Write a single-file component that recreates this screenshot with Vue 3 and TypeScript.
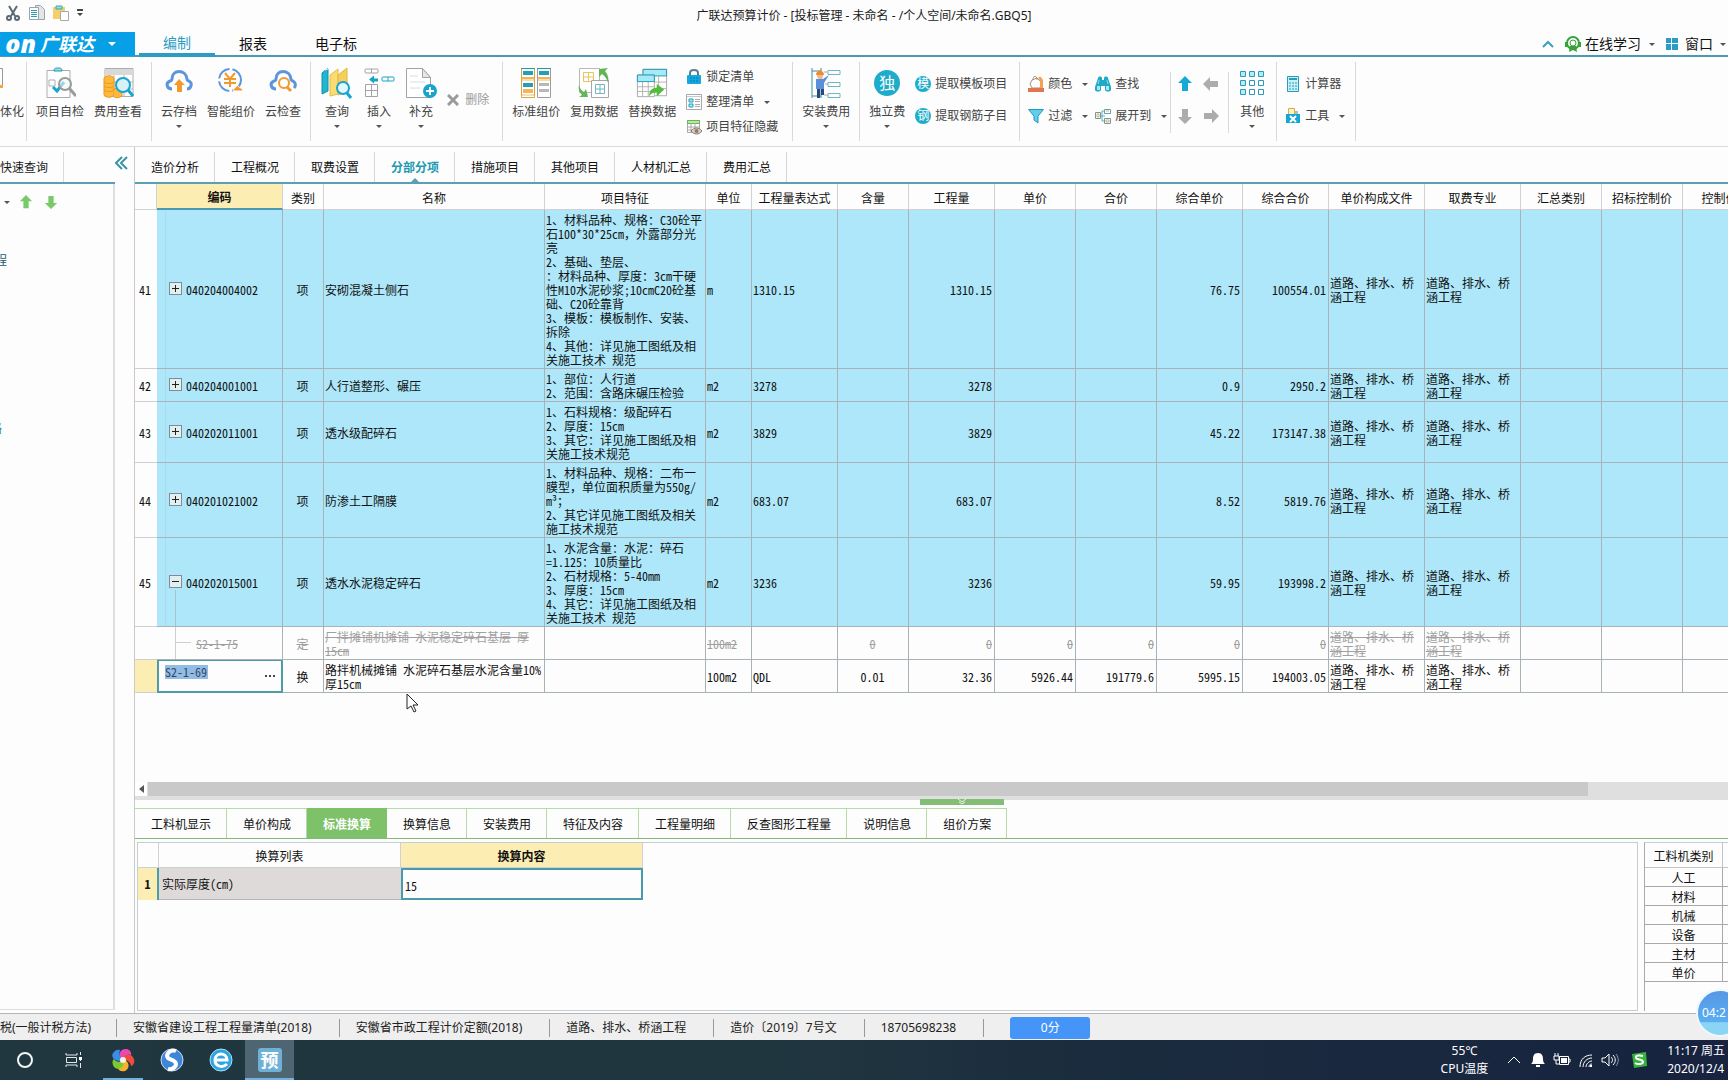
<script setup lang="ts">
import { ref } from 'vue'

interface Tool { label: string; icon: string; menu?: boolean }
interface Row {
  no: string; code: string; kind: string; name: string; feature: string; unit: string
  expr: string; content: string; qty: string; price: string; total: string
  unitPrice: string; sumPrice: string; state: 'item' | 'open' | 'struck' | 'editing'
}

const menuTabs = ['编制', '报表', '电子标']
const activeMenu = ref('编制')

const checkTools: Tool[] = [
  { label: '项目自检', icon: 'check' },
  { label: '费用查看', icon: 'fee' },
]
const cloudTools: Tool[] = [
  { label: '云存档', icon: 'cloud-up', menu: true },
  { label: '智能组价', icon: 'smart' },
  { label: '云检查', icon: 'cloud-find' },
]
const editTools: Tool[] = [
  { label: '查询', icon: 'books', menu: true },
  { label: '插入', icon: 'insert', menu: true },
  { label: '补充', icon: 'add', menu: true },
]
const dataTools: Tool[] = [
  { label: '标准组价', icon: 'standard' },
  { label: '复用数据', icon: 'reuse' },
  { label: '替换数据', icon: 'replace' },
]
const listTools: Tool[] = [
  { label: '锁定清单', icon: 'lock' },
  { label: '整理清单', icon: 'tidy', menu: true },
  { label: '项目特征隐藏', icon: 'hide' },
]

const pages = ['造价分析', '工程概况', '取费设置', '分部分项', '措施项目', '其他项目', '人材机汇总', '费用汇总']
const activePage = ref('分部分项')

const columns: { label: string; width: number }[] = [
  { label: '', width: 22 }, { label: '编码', width: 126 }, { label: '类别', width: 41 },
  { label: '名称', width: 221 }, { label: '项目特征', width: 161 }, { label: '单位', width: 46 },
  { label: '工程量表达式', width: 86 }, { label: '含量', width: 71 }, { label: '工程量', width: 86 },
  { label: '单价', width: 81 }, { label: '合价', width: 81 }, { label: '综合单价', width: 86 },
  { label: '综合合价', width: 86 }, { label: '单价构成文件', width: 96 }, { label: '取费专业', width: 96 },
  { label: '汇总类别', width: 81 }, { label: '招标控制价', width: 81 }, { label: '控制价合价', width: 98 },
]

const major = '道路、排水、桥\n涵工程'

const rows: Row[] = [
  {
    no: '41', code: '040204004002', kind: '项', name: '安砌混凝土侧石',
    feature: '1、材料品种、规格：C30砼平\n石100*30*25cm，外露部分光\n亮\n2、基础、垫层、\n：材料品种、厚度：3cm干硬\n性M10水泥砂浆;10cmC20砼基\n础、C20砼靠背\n3、模板：模板制作、安装、\n拆除\n4、其他：详见施工图纸及相\n关施工技术 规范',
    unit: 'm', expr: '1310.15', content: '', qty: '1310.15', price: '', total: '',
    unitPrice: '76.75', sumPrice: '100554.01', state: 'item',
  },
  {
    no: '42', code: '040204001001', kind: '项', name: '人行道整形、碾压',
    feature: '1、部位：人行道\n2、范围：含路床碾压检验',
    unit: 'm2', expr: '3278', content: '', qty: '3278', price: '', total: '',
    unitPrice: '0.9', sumPrice: '2950.2', state: 'item',
  },
  {
    no: '43', code: '040202011001', kind: '项', name: '透水级配碎石',
    feature: '1、石料规格：级配碎石\n2、厚度：15cm\n3、其它：详见施工图纸及相\n关施工技术规范',
    unit: 'm2', expr: '3829', content: '', qty: '3829', price: '', total: '',
    unitPrice: '45.22', sumPrice: '173147.38', state: 'item',
  },
  {
    no: '44', code: '040201021002', kind: '项', name: '防渗土工隔膜',
    feature: '1、材料品种、规格：二布一\n膜型，单位面积质量为550g/\nm³；\n2、其它详见施工图纸及相关\n施工技术规范',
    unit: 'm2', expr: '683.07', content: '', qty: '683.07', price: '', total: '',
    unitPrice: '8.52', sumPrice: '5819.76', state: 'item',
  },
  {
    no: '45', code: '040202015001', kind: '项', name: '透水水泥稳定碎石',
    feature: '1、水泥含量：水泥：碎石\n=1.125：10质量比\n2、石材规格：5-40mm\n3、厚度：15cm\n4、其它：详见施工图纸及相\n关施工技术 规范',
    unit: 'm2', expr: '3236', content: '', qty: '3236', price: '', total: '',
    unitPrice: '59.95', sumPrice: '193998.2', state: 'open',
  },
  {
    no: '', code: 'S2-1-75', kind: '定', name: '厂拌摊铺机摊铺 水泥稳定碎石基层 厚\n15cm', feature: '',
    unit: '100m2', expr: '', content: '0', qty: '0', price: '0', total: '0',
    unitPrice: '0', sumPrice: '0', state: 'struck',
  },
  {
    no: '', code: 'S2-1-69', kind: '换', name: '路拌机械摊铺 水泥碎石基层水泥含量10%\n厚15cm', feature: '',
    unit: '100m2', expr: 'QDL', content: '0.01', qty: '32.36', price: '5926.44', total: '191779.6',
    unitPrice: '5995.15', sumPrice: '194003.05', state: 'editing',
  },
]

const detailTabs = ['工料机显示', '单价构成', '标准换算', '换算信息', '安装费用', '特征及内容', '工程量明细', '反查图形工程量', '说明信息', '组价方案']
const activeDetail = ref('标准换算')
const thickness = ref('15')
const editedCode = ref('S2-1-69')
const resourceKinds = ['人工', '材料', '机械', '设备', '主材', '单价']
const statusItems = ['安徽省建设工程工程量清单(2018)', '安徽省市政工程计价定额(2018)', '道路、排水、桥涵工程', '造价〔2019〕7号文', '18705698238']
</script>

<template>
  <svg class="sprite" aria-hidden="true">
    <symbol id="check" viewBox="0 0 32 32">
      <path d="M3 3.500h23v27H3z" fill="#fff" stroke="#a9adb0" />
      <path d="M10 4c0-3 2-3 4-3s4 0 4 3z" fill="#8fe0f2" stroke="#2a93ad" />
      <path d="M5 13h6v6H5z" fill="none" stroke="#a9adb0" />
      <path d="M9 20l4 4 7-9" fill="none" stroke="#14a6d2" stroke-width="3" />
      <circle cx="21" cy="17" r="6" fill="#eef6f8" fill-opacity=".6" stroke="#9a9a9a" stroke-width="2" />
      <path d="M25 21l7 8" stroke="#9a9a9a" stroke-width="3" />
    </symbol>
    <symbol id="fee" viewBox="0 0 32 32">
      <path d="M3 1.500h28v28H3z" fill="#fff" stroke="#a9adb0" /><path d="M3 2h28v6H3z" fill="#d9d9d9" />
      <path d="M3 15h28M3 22h28M12 8v22M22 8v22" stroke="#b6b6b6" />
      <path d="M2 11c2-3 8-3 10 0v17c-2 3-8 3-10 0z" fill="#ffb83d" stroke="#e89a1c" />
      <path d="M2 15c2 2 8 2 10 0M2 19c2 2 8 2 10 0M2 23c2 2 8 2 10 0M12 22c3-1 6 0 8 1v6c-3 2-6 2-8 1" fill="#ffb83d" stroke="#e89a1c" />
      <circle cx="21" cy="18" r="7" fill="#d7f1f8" stroke="#17a5d0" stroke-width="2" />
      <path d="M26 23l5 6" stroke="#17a5d0" stroke-width="3" />
    </symbol>
    <symbol id="cloud-up" viewBox="0 0 32 32">
      <path d="M9 22c-5 0-7-6-2-8 1 0 2-1 2-2 0-10 14-10 15 0 0 1 1 2 2 2 4 2 2 8-2 8" fill="none" stroke="#5b96dc" stroke-width="3" />
      <path d="M16 12l-5 6h3v7h5v-7h3z" fill="#f39a2d" />
    </symbol>
    <symbol id="smart" viewBox="0 0 32 32">
      <circle cx="15" cy="13" r="11" fill="none" stroke="#5b96dc" stroke-width="2" stroke-dasharray="15 3" />
      <path d="M10 6l5 6 5-6M9 12h12M9 16h12M15 12v8" fill="none" stroke="#f39a2d" stroke-width="2" />
      <path d="M18 24c0-3 3-3 4-6 2 3 6 3 6 6z" fill="#f39a2d" stroke="#fff" />
    </symbol>
    <symbol id="cloud-find" viewBox="0 0 32 32">
      <path d="M9 22c-5 0-7-6-2-8 1 0 2-1 2-2 0-10 14-10 15 0 0 1 1 2 2 2 3 2 3 5 1 7" fill="none" stroke="#5b96dc" stroke-width="3" />
      <circle cx="17" cy="16" r="5" fill="#fff" stroke="#f39a2d" stroke-width="2" /><path d="M20 20l4 4" stroke="#f39a2d" stroke-width="3" />
    </symbol>
    <symbol id="books" viewBox="0 0 32 32">
      <path d="M1 6l6-5v23l-6 3z" fill="#22b5cf" stroke="#178fa8" /><path d="M4 3l5-2v4" fill="none" stroke="#fff" />
      <path d="M9 8l8-6v25l-8 2z" fill="#fbdc72" stroke="#e3bd48" /><path d="M17 8l9-7v23l-9 4z" fill="#f6cf5b" stroke="#dfb842" />
      <circle cx="22" cy="21" r="6" fill="#e5f7fb" stroke="#17a5d0" stroke-width="2" /><path d="M26 26l4 5" stroke="#17a5d0" stroke-width="3" />
    </symbol>
    <symbol id="insert" viewBox="0 0 32 32">
      <g fill="#fff" stroke="#a3a3a3"><rect x="2" y="2" width="13" height="4" rx="1" /><path d="M8.500 2v4M2.500 17.500h12v12h-12zM2.500 23.500h12M8.500 17.500v12" /></g>
      <g stroke="#17a5c4" fill="#fff"><rect x="19" y="10" width="12" height="4" rx="1" /><path d="M25 10v4" /></g>
      <path d="M6 12.500l5-4v3h4v3h-4v2z" fill="#17a5c4" />
    </symbol>
    <symbol id="add" viewBox="0 0 32 32">
      <path d="M1.500 1.500h16l8 9v20h-24z" fill="#fff" stroke="#a3a3a3" /><path d="M17.500 1.500v9h8z" fill="#e6e6e6" stroke="#a3a3a3" />
      <path d="M5 15h15M5 21h10M5 9h8" stroke="#dcdcdc" /><circle cx="25" cy="24" r="7" fill="#17a5d0" />
      <path d="M25 20v8M21 24h8" stroke="#fff" stroke-width="2" />
    </symbol>
    <symbol id="standard" viewBox="0 0 32 32">
      <g fill="#fff"><path d="M1.500 1.500h13v29h-13z" stroke="#d9a441" /><path d="M17.500 1.500h13v29h-13z" stroke="#9d9d9d" /></g>
      <path d="M1 1.500h14M17 1.500h14" stroke="#1f9db8" />
      <path d="M3 4h10v4H3zM19 4h10v4H19zM3 16h10v4H3z" fill="#23a0b5" /><path d="M2 10h12v2H2zM18 10h12v2H18zM3 22h10v4H3z" fill="#f4b654" />
      <path d="M2 13h12M18 13h12M2 28h12" stroke="#e6bd6b" /><path d="M19 16h10v3H19zM19 22h10v3H19z" fill="#b7b7b7" />
    </symbol>
    <symbol id="reuse" viewBox="0 0 32 32">
      <path d="M1.500 1.500h20v24h-20z" fill="#fff" stroke="#b9b9b9" /><path d="M5.500 5.500h10v9h-10zM5.500 10h10M10.500 5.500v9" fill="none" stroke="#ecc45d" />
      <path d="M13.500 13.500h17v17h-17z" fill="#fff" stroke="#a6a6a6" /><path d="M17.500 17.500h9v9h-9zM17.500 22h9M22 17.500v9" fill="none" stroke="#6eb6c2" />
      <path d="M21 2l9-1-3 3c3 4 4 7 3 12-1-4-3-7-6-9l-3 3zM1 18c1 4 3 6 5 7l2-3 2 8H1l3-2c-3-3-4-6-3-10z" fill="#63b556" />
    </symbol>
    <symbol id="replace" viewBox="0 0 34 32">
      <path d="M7.500 1.500h25v28h-25z" fill="#fff" stroke="#a7a7a7" /><path d="M7.500 1.500h25v7h-25z" fill="#a3ecf7" stroke="#2394ae" />
      <path d="M15 9v20M24 9v20M7 15h25M7 22h25" stroke="#b1b1b1" /><path d="M1.500 7.500h18v23h-18z" fill="#fff" stroke="#a7a7a7" />
      <path d="M1.500 7.500h18v7h-18z" fill="#a3ecf7" stroke="#2394ae" /><path d="M7 15v15M13 15v15M2 20h17M2 25h17" stroke="#b1b1b1" />
      <path d="M22 17l8 6-8 7v-4c-4 0-6 1-8 4 0-6 3-9 8-9z" fill="#55bb3f" />
    </symbol>
    <symbol id="worker" viewBox="0 0 32 32">
      <path d="M2 1v30M11 1v30M2 4h9M2 29h9" stroke="#3b91a5" />
      <circle cx="10" cy="9" r="3" fill="#f7b68a" /><path d="M6 8c0-6 8-6 8 0z" fill="#f08a2e" />
      <path d="M6 12h7l6-4-5 8v6H6z" fill="#5b8fdb" /><path d="M7 22h3v9H7zM11 22h3v6h-3z" fill="#264a80" />
      <g fill="none" stroke="#6db7c4"><path d="M18 3.500h12v4H18zM18 15.500h12v4H18zM18 26.500h12v4H18z" /><path d="M14 5h4M15 17h3M14 28h4" stroke="#aaa" /></g>
    </symbol>
    <symbol id="grid" viewBox="0 0 26 26">
      <g stroke="#2c9ab8" fill="#b5ebf6"><path d="M1.500 1.500h5v5h-5zM10.500 1.500h5v5h-5zM19.500 1.500h5v5h-5zM1.500 10.500h5v5h-5zM1.500 19.500h5v5h-5z" /><path d="M10.500 10.500h5v5h-5zM19.500 10.500h5v5h-5zM10.500 19.500h5v5h-5zM19.500 19.500h5v5h-5z" fill="#fff" /></g>
    </symbol>
    <symbol id="lock" viewBox="0 0 16 16">
      <path d="M4 7V4c0-4 8-4 8 0v3" fill="none" stroke="#5f7d89" stroke-width="2" /><rect x="1" y="6" width="14" height="9" rx="1" fill="#13a9e0" />
      <path d="M4 9h8M4 12h8" stroke="#0779a8" stroke-dasharray="2 1" />
    </symbol>
    <symbol id="tidy" viewBox="0 0 16 16">
      <path d="M.5 .5h15v15H.5z" fill="#fff" stroke="#a9a9a9" /><path d="M1 2.500h14" stroke="#c9c9c9" /><path d="M3 5h4v3H3zM3 10h4v3H3z" fill="#a3e5f0" stroke="#28a2c0" />
      <path d="M9 5.500h5M9 7.500h5M9 10.500h5M9 12.500h5" stroke="#aaa" />
    </symbol>
    <symbol id="hide" viewBox="0 0 16 16">
      <path d="M1.500 1.500h12v12h-12z" fill="#fff" stroke="#a9a9a9" /><path d="M1.500 1.500h12v3h-12z" fill="#b9e6a4" stroke="#66b54b" /><path d="M1 8h12M1 11h12M5 4v10M9 4v10" stroke="#aaa" />
      <path d="M5 12c3-4 8-4 11 0-3 4-8 4-11 0z" fill="#ddd0c4" stroke="#8f7a6b" /><circle cx="10.500" cy="12" r="2" fill="#8f7a6b" />
    </symbol>
    <symbol id="color" viewBox="0 0 16 16">
      <path d="M4 4l5-2 5 5-2 5H4L2 8z" fill="#fff" stroke="#a68f7d" /><path d="M5 4c0-5 4-5 4 0" fill="none" stroke="#a68f7d" /><path d="M10 1h3l2 3v8h-3V5z" fill="#f2a256" /><path d="M0 12h16v4H0z" fill="#e2744f" />
    </symbol>
    <symbol id="find" viewBox="0 0 16 16">
      <path d="M3 2c0-2 4-2 4 0v2h2V2c0-2 4-2 4 0l3 9v3c-1 2-5 2-6 0v-4H6v4c-1 2-5 2-6 0v-3z" fill="#21a9c9" /><path d="M2 10h3v4H2zM11 10h3v4h-3z" fill="#a9e7f2" /><path d="M4 4l-1 4M12 4l1 4" stroke="#8fdcec" />
    </symbol>
    <symbol id="filter" viewBox="0 0 16 16"><path d="M.5 1.500h15L10 8v7l-4-3V8z" fill="#63cdec" stroke="#2598bd" /></symbol>
    <symbol id="expand" viewBox="0 0 16 16">
      <path d="M5 8h5M7 3v10M7 3h3M7 13h3" stroke="#5db0c0" fill="none" /><path d="M.5 4.500h5v6h-5zM9.500 1.500h6v4h-6zM9.500 10.500h6v5h-6z" fill="#fff" stroke="#6b9ca8" /><path d="M2 6h2v3H2zM11 3h3M11 12h3v2h-3z" stroke="#e5ad65" fill="none" />
    </symbol>
    <symbol id="calc" viewBox="0 0 16 16">
      <path d="M2.500 .5h11v15h-11z" fill="#c7eff7" stroke="#2b9cb8" /><path d="M4 3h8" stroke="#2b9cb8" stroke-width="2" /><path d="M4 7h8M4 10h8M4 13h8" stroke="#2b9cb8" stroke-dasharray="2 1" />
    </symbol>
    <symbol id="toolbox" viewBox="0 0 16 16">
      <path d="M3.500 .5h6v6h-6z" fill="#fff1bd" stroke="#d9ad45" /><path d="M10 3h3v4h-3z" fill="#bbb" /><path d="M1 6h14v9H1z" fill="#15a7d3" /><path d="M5 8l6 6M11 8l-6 6" stroke="#fff" stroke-width="2" />
    </symbol>
    <symbol id="arrow" viewBox="0 0 16 16"><path d="M8 0l7 7h-4v8H5V7H1z" fill="currentColor" /></symbol>
    <symbol id="cut" viewBox="0 0 16 16">
      <path d="M4 1l6 10M12 1L6 11" stroke="#5a6a74" stroke-width="2" /><circle cx="4" cy="13" r="2" fill="none" stroke="#5a6a74" stroke-width="2" /><circle cx="12" cy="13" r="2" fill="none" stroke="#5a6a74" stroke-width="2" />
    </symbol>
    <symbol id="copy" viewBox="0 0 16 16">
      <path d="M6.500 .5h5l4 4v10h-9z" fill="#e2e6e8" stroke="#9aa5aa" /><path d="M.5 2.500h9v12h-9z" fill="#fff" stroke="#9aa5aa" /><path d="M2 5.500h6M2 7.500h6M2 9.500h6M2 11.500h6" stroke="#2d9fb5" />
    </symbol>
    <symbol id="paste" viewBox="0 0 16 16">
      <path d="M0 2h12v12H0z" fill="#f5cf69" /><path d="M3 4V1h6v3z" fill="#8fe3ea" stroke="#3ba7b5" /><path d="M7.500 6.500h8v9h-8z" fill="#fff" stroke="#a7a7a7" />
    </symbol>
  </svg>

  <div class="app">
    <header class="titlebar">
      <div class="quick">
        <button aria-label="剪切"><svg class="s16"><use href="#cut" /></svg></button>
        <button aria-label="复制"><svg class="s16"><use href="#copy" /></svg></button>
        <button aria-label="粘贴"><svg class="s16"><use href="#paste" /></svg></button>
        <button aria-label="自定义"><svg width="6" height="8" viewBox="0 0 6 8"><path d="M0 1h6" stroke="#444" stroke-width="2" /><path d="M0 4h6L3 7z" fill="#444" /></svg></button>
      </div>
      <h1>广联达预算计价 - [投标管理 - 未命名 - /个人空间/未命名.GBQ5]</h1>
    </header>

    <nav class="menubar">
      <button class="brand"><span class="latin">on</span><span class="cn">广联达</span><i class="caret white"></i></button>
      <button v-for="tab in menuTabs" :key="tab" class="menu-tab" :class="{ active: tab === activeMenu }" @click="activeMenu = tab">{{ tab }}</button>
      <div class="menu-right">
        <svg width="12" height="8" viewBox="0 0 12 8"><path d="M1 7l5-5 5 5" fill="none" stroke="#3a9fc4" stroke-width="2" /></svg>
        <button class="online">
          <svg class="s16" viewBox="0 0 16 16"><circle cx="8" cy="7" r="6" fill="none" stroke="#35a335" stroke-width="2" /><circle cx="8" cy="7" r="3" fill="none" stroke="#35a335" /><path d="M0 6h2v5H0zM14 6h2v5h-2zM5 10h6l1 6-4-2-4 2z" fill="#35a335" /></svg>
          在线学习<i class="caret"></i>
        </button>
        <button class="window">
          <svg width="12" height="12" viewBox="0 0 12 12"><path d="M0 0h5v5H0zM6 0h6v5H6zM0 6h5v6H0zM6 6h6v6H6z" fill="#2a9cc6" /></svg>
          窗口<i class="caret"></i>
        </button>
      </div>
    </nav>

    <section class="ribbon">
      <div class="group first"><button class="big"><svg class="cropped" width="3" height="32" viewBox="0 0 3 32"><path d="M0 1.500h2.500v18H0" fill="none" stroke="#999" /><path d="M0 18h3v3H0z" fill="#f0a93b" /></svg>体化</button></div>
      <div class="group">
        <button v-for="t in checkTools" :key="t.label" class="big"><svg class="s32"><use :href="'#' + t.icon" /></svg>{{ t.label }}</button>
      </div>
      <div class="group">
        <button v-for="t in cloudTools" :key="t.label" class="big"><svg class="s32"><use :href="'#' + t.icon" /></svg>{{ t.label }}<i v-if="t.menu" class="caret"></i></button>
      </div>
      <div class="group edit">
        <button v-for="t in editTools" :key="t.label" class="big"><svg class="s32"><use :href="'#' + t.icon" /></svg>{{ t.label }}<i v-if="t.menu" class="caret"></i></button>
        <button class="small delete" disabled><svg width="12" height="12" viewBox="0 0 12 12"><path d="M1 1l10 10M11 1L1 11" stroke="#9a9a9a" stroke-width="3" /></svg>删除</button>
      </div>
      <div class="group">
        <button v-for="t in dataTools" :key="t.label" class="big"><svg class="s32"><use :href="'#' + t.icon" /></svg>{{ t.label }}</button>
        <div class="stack three">
          <button v-for="t in listTools" :key="t.label" class="small"><svg class="s16"><use :href="'#' + t.icon" /></svg>{{ t.label }}<i v-if="t.menu" class="caret"></i></button>
        </div>
      </div>
      <div class="group"><button class="big"><svg class="s32"><use href="#worker" /></svg>安装费用<i class="caret"></i></button></div>
      <div class="group fees">
        <button class="big"><span class="s32 disc-box"><b class="disc">独</b></span>独立费<i class="caret"></i></button>
        <div class="stack">
          <button class="small"><b class="disc mini">模</b>提取模板项目</button>
          <button class="small"><b class="disc mini">钢</b>提取钢筋子目</button>
        </div>
      </div>
      <div class="group view">
        <div class="stack">
          <button class="small"><svg class="s16"><use href="#color" /></svg>颜色<i class="caret"></i></button>
          <button class="small"><svg class="s16"><use href="#filter" /></svg>过滤<i class="caret"></i></button>
        </div>
        <div class="stack">
          <button class="small"><svg class="s16"><use href="#find" /></svg>查找</button>
          <button class="small"><svg class="s16"><use href="#expand" /></svg>展开到<i class="caret"></i></button>
        </div>
        <div class="moves">
          <button aria-label="上移" class="on"><svg class="s16"><use href="#arrow" /></svg></button>
          <button aria-label="升级"><svg class="s16 left"><use href="#arrow" /></svg></button>
          <button aria-label="下移"><svg class="s16 down"><use href="#arrow" /></svg></button>
          <button aria-label="降级"><svg class="s16 right"><use href="#arrow" /></svg></button>
        </div>
        <button class="big"><svg class="s32 grid-icon"><use href="#grid" /></svg>其他<i class="caret"></i></button>
      </div>
      <div class="group tools">
        <div class="stack">
          <button class="small"><svg class="s16"><use href="#calc" /></svg>计算器</button>
          <button class="small"><svg class="s16"><use href="#toolbox" /></svg>工具<i class="caret"></i></button>
        </div>
      </div>
    </section>

    <div class="body">
      <aside class="side">
        <div class="side-head"><button>快速查询</button></div>
        <div class="side-panel">
          <div class="side-tools"><i class="caret"></i><svg class="s14"><use href="#arrow" /></svg><svg class="s14 down"><use href="#arrow" /></svg></div>
          <a href="#" class="node"><span>程</span></a>
          <a href="#" class="node section"><span>路</span></a>
        </div>
      </aside>
      <div class="gutter"><button aria-label="收起"><svg width="14" height="14" viewBox="0 0 14 14"><path d="M7 1L1 7l6 6M12 1L6 7l6 6" fill="none" stroke="#3b94a6" stroke-width="2" /></svg></button></div>

      <main class="main">
        <nav class="pages">
          <button v-for="p in pages" :key="p" :class="{ active: p === activePage }" @click="activePage = p">{{ p }}</button>
        </nav>

        <div class="sheet-wrap">
          <table class="sheet">
            <colgroup><col v-for="(c, i) in columns" :key="i" :style="{ width: c.width + 'px' }"></colgroup>
            <thead><tr><th v-for="(c, i) in columns" :key="i" :class="{ current: i === 1 }">{{ c.label }}</th></tr></thead>
            <tbody>
              <tr v-for="r in rows" :key="r.code" :class="r.state">
                <td class="no">{{ r.no }}</td>
                <td class="code">
                  <label v-if="r.state === 'editing'" class="editor"><input v-model="editedCode" aria-label="编码"><button aria-label="选择"><svg width="10" height="2" viewBox="0 0 10 2"><path d="M0 0h2v2H0zM4 0h2v2H4zM8 0h2v2H8z" fill="#445" /></svg></button></label>
                  <div v-else class="code-line"><span v-if="r.no" class="toggle" :class="{ minus: r.state === 'open' }"></span><span class="code-text">{{ r.code }}</span></div>
                </td>
                <td class="mid">{{ r.kind }}</td>
                <td>{{ r.name }}</td>
                <td>{{ r.feature }}</td>
                <td>{{ r.unit }}</td>
                <td>{{ r.expr }}</td>
                <td class="mid">{{ r.content }}</td>
                <td class="num">{{ r.qty }}</td>
                <td class="num">{{ r.price }}</td>
                <td class="num">{{ r.total }}</td>
                <td class="num">{{ r.unitPrice }}</td>
                <td class="num">{{ r.sumPrice }}</td>
                <td>{{ major }}</td>
                <td>{{ major }}</td>
                <td></td><td></td><td></td>
              </tr>
            </tbody>
          </table>
          <svg class="pointer" width="13" height="20" viewBox="0 0 13 20"><path d="M1 1v15l4-3 3 6 2-1-3-6h5z" fill="#fff" stroke="#222" /></svg>
        </div>

        <div class="scrollbar">
          <button aria-label="向左滚动"><svg width="5" height="8" viewBox="0 0 5 8"><path d="M5 0v8L0 4z" fill="#555" /></svg></button>
          <div class="thumb"></div>
        </div>
        <div class="splitter"><span class="handle"><svg width="10" height="6" viewBox="0 0 10 6"><path d="M1 0l4 3 4-3M2 3l3 2 3-2" fill="none" stroke="#e9f6e5" /></svg></span></div>

        <nav class="details">
          <button v-for="d in detailTabs" :key="d" :class="{ active: d === activeDetail }" @click="activeDetail = d">{{ d }}</button>
        </nav>

        <div class="lower">
          <section class="convert">
            <table>
              <thead><tr><th class="c-no"></th><th class="c-list">换算列表</th><th class="c-value">换算内容</th></tr></thead>
              <tbody><tr><td class="c-no">1</td><td class="c-list"><label for="thickness">实际厚度(cm)</label></td><td class="c-value"><input id="thickness" v-model="thickness"></td></tr></tbody>
            </table>
          </section>
          <section class="kinds">
            <table>
              <thead><tr><th>工料机类别</th><th></th></tr></thead>
              <tbody><tr v-for="k in resourceKinds" :key="k"><td>{{ k }}</td><td></td></tr></tbody>
            </table>
          </section>
        </div>
      </main>
    </div>

    <footer class="status">
      <span class="tax">税(一般计税方法)</span>
      <span v-for="s in statusItems" :key="s" class="status-item">{{ s }}</span>
      <button class="score">0分</button>
    </footer>

    <div class="taskbar">
      <button class="task" aria-label="搜索"><svg width="18" height="18" viewBox="0 0 18 18"><circle cx="9" cy="9" r="7" fill="none" stroke="#f2f5f6" stroke-width="2" /></svg></button>
      <button class="task" aria-label="任务视图"><svg width="18" height="18" viewBox="0 0 18 18"><path d="M1 2v2h11V2M1 16v-2h11v2M1.500 6.500h10v5h-10zM15.500 1v3M15.500 12v5M15.500 6v4" fill="none" stroke="#e3e8ea" /><path d="M14 6h3v3h-3z" fill="#fff" /></svg></button>
      <button class="task running" aria-label="浏览器"><svg width="24" height="24" viewBox="0 0 24 24">
        <g><path d="M12 12C6 9 8 0 16 1c3 1 5 4 4 6-3-1-7 0-8 5z" fill="#e948b0" /><path d="M12 12c0-6 8-8 11-1 1 4-1 7-3 7 0-3-3-6-8-6z" fill="#f24b3c" /><path d="M12 12c6 0 8 8 2 11-4 1-7-1-7-3 3 0 6-3 5-8z" fill="#f8b22b" /><path d="M12 12c3 6-4 12-9 7-2-3-2-7 0-8 2 3 5 4 9 1z" fill="#7cc92f" /><path d="M12 12C6 15-1 10 2 5c2-3 5-4 7-3-1 3-1 7 3 10z" fill="#3a8de8" /></g><circle cx="12" cy="12" r="3" fill="#f7f1e8" />
      </svg></button>
      <button class="task" aria-label="搜狗浏览器"><svg width="24" height="24" viewBox="0 0 24 24"><circle cx="12" cy="12" r="11" fill="#3f86d8" stroke="#c9e1f5" /><path d="M16 3c-5-2-11 3-8 7 2 2 8 2 8 6 0 3-4 6-8 5" fill="none" stroke="#fff" stroke-width="4" /></svg></button>
      <button class="task" aria-label="网页"><svg width="24" height="24" viewBox="0 0 24 24"><circle cx="12" cy="12" r="11" fill="#2ea3e6" stroke="#a8e0f8" /><path d="M7 12h11c0-8-12-8-12 0 0 7 8 8 12 4" fill="none" stroke="#fff" stroke-width="3" /></svg></button>
      <button class="task running current" aria-label="预算计价"><span class="yu">预</span></button>
      <div class="tray">
        <div class="cpu"><span>55℃</span><span>CPU温度</span></div>
        <svg class="t-up" width="14" height="8" viewBox="0 0 14 8"><path d="M1 7l6-6 6 6" fill="none" stroke="#fff" /></svg>
        <svg width="16" height="16" viewBox="0 0 16 16"><path d="M8 1c4 0 5 3 5 6 0 3 1 4 2 5H1c1-1 2-2 2-5 0-3 1-6 5-6zM6 13h4v2H6z" fill="#fff" /></svg>
        <svg width="18" height="16" viewBox="0 0 18 16"><path d="M6.500 4.500h9v8h-9zM16 7h1v3h-1M1 4h5v4H1zM2 1v3M5 1v3M3 8v4h3" fill="none" stroke="#fff" /><path d="M8 6h6v5H8z" fill="#fff" /></svg>
        <svg width="16" height="16" viewBox="0 0 16 16"><path d="M2 15C2 7 7 3 14 3M5 15c0-5 4-9 9-9M8 15c0-3 3-6 6-6M11 15c0-2 1-3 3-3" fill="none" stroke="#fff" /><path d="M12 13h2v2h-2z" fill="#fff" /></svg>
        <svg width="18" height="16" viewBox="0 0 18 16"><path d="M1 6h3l4-4v12l-4-4H1zM10 5c2 2 2 4 0 6M12 3c3 3 3 7 0 10" fill="none" stroke="#fff" /><path d="M15 2c3 4 3 8 0 12" fill="none" stroke="#8795a3" /></svg>
        <svg class="ime" width="18" height="18" viewBox="0 0 18 18"><path d="M2 3l14-2 1 14-13 2z" fill="#35b53c" /><path d="M13 5c-3-1-8-1-7 2 1 2 7 1 7 4 0 2-5 3-8 1" fill="none" stroke="#fff" stroke-width="2" /></svg>
        <div class="clock"><span>11:17 周五</span><span>2020/12/4</span></div>
      </div>
    </div>

    <div class="timer">04:2</div>
  </div>
</template>

<style>
body { margin: 0; }
</style>

<style scoped>
* { box-sizing: border-box; }
.sprite { position: absolute; width: 0; height: 0; }
.app {
  --line: #4a9ab3;
  position: relative; display: flex; flex-direction: column; min-height: 100vh; overflow: hidden;
  background: #fdfdfd; color: #1a1a1a; text-spacing-trim: space-all;
  font: 12px/16px "Noto Sans", "Noto Sans CJK SC", sans-serif;
}
button, input { font: inherit; color: inherit; margin: 0; padding: 0; border: 0; background: none; border-radius: 0; outline: 0; }
button { white-space: nowrap; cursor: default; }
svg { display: block; flex: none; }
.s16 { width: 16px; height: 16px; }
.s14 { width: 14px; height: 14px; }
.s32 { width: 32px; height: 32px; }
.down { transform: rotate(180deg); }
.left { transform: rotate(-90deg); }
.right { transform: rotate(90deg); }
.caret { display: block; flex: none; width: 0; height: 0; border: 3px solid transparent; border-top-color: #555; border-bottom: 0; }
.caret.white { border-width: 4px 4px 0; border-top-color: #fff; }

.titlebar { display: flex; align-items: flex-start; justify-content: center; height: 32px; position: relative; }
.titlebar h1 { margin: 8px 0 0; font-size: 12px; line-height: 16px; font-weight: 400; }
.quick { position: absolute; left: 5px; top: 5px; display: flex; align-items: center; gap: 8px; }

.menubar { display: flex; height: 25px; border-bottom: 2px solid var(--line); font-size: 14px; line-height: 20px; }
.brand { display: flex; justify-content: flex-end; align-items: center; gap: 4px; width: 135px; height: 24px; padding-right: 19px; margin-right: 4px; overflow: hidden; background: #079fe6; color: #fff; }
.brand .latin { font: italic 800 25px/24px "Open Sans", sans-serif; padding-bottom: 2px; }
.brand .cn { font-size: 18px; line-height: 24px; font-weight: 700; font-style: italic; margin-right: 10px; }
.menu-tab { min-width: 76px; height: 25px; padding: 1px 24px 3px; color: #111; }
.menu-tab.active { color: #2b9cc2; border-bottom: 4px solid #2b9cc2; padding-bottom: 0; }
.menu-right { display: flex; align-items: center; gap: 11px; margin-left: auto; padding: 1px 2px 0 0; color: #111; }
.online, .window { display: flex; align-items: center; gap: 4px; }
.online .caret { margin-left: 4px; }
.window { gap: 7px; }

.ribbon { display: flex; height: 90px; padding: 5px 0; border-bottom: 1px solid #dadada; color: #444; overflow: hidden; }
.group { display: flex; flex: none; gap: 10px; height: 79px; padding: 5px 9px 0; border-right: 1px solid #d9d9d9; }
.group.first { width: 27px; padding: 5px 2px 0 0; justify-content: flex-start; }
.first .cropped { align-self: flex-start; margin-bottom: 5px; }
.group.edit { gap: 18px; padding-left: 14px; padding-right: 13px; }
.big { display: flex; flex-direction: column; align-items: center; flex: none; line-height: 16px; }
.big .s32 { margin-bottom: 5px; }
.edit .s32 { margin-left: -4px; margin-right: -4px; }
.big .caret { margin-top: 5px; }
.small { display: flex; align-items: center; gap: 4px; height: 16px; line-height: 16px; }
.small .caret { margin-left: 6px; }
.delete { margin: 25px 0 0 -4px; color: #9a9a9a; gap: 6px; }
.stack { display: flex; flex-direction: column; gap: 16px; padding-top: 9px; }
.stack.three { gap: 9px; padding: 2px 5px 0 0; }
.disc-box { display: flex; align-items: center; justify-content: center; }
.disc { display: flex; align-items: center; justify-content: center; width: 26px; height: 26px; border-radius: 50%; background: #1eacca; color: #fff; font-size: 16px; font-weight: 400; }
.disc.mini { width: 16px; height: 16px; font-size: 12px; }
.fees { padding-right: 12px; }
.view { gap: 7px; padding-left: 8px; padding-right: 8px; }
.moves { display: grid; grid-template-columns: 16px 16px; gap: 16px 10px; align-content: start; height: 61px; margin: 5px 0 0 -4px; padding: 4px 9px 0 6px; border: solid #d9d9d9; border-width: 0 1px; color: #acacac; }
.moves .on { color: #17a9d6; }
.grid-icon { padding: 3px; }
.tools { padding-right: 10px; padding-left: 8px; }

.body { display: flex; flex: 1; }
.side { display: flex; flex-direction: column; width: 115px; }
.side-head { display: flex; height: 37px; border-bottom: 2px solid #5b9fb5; }
.side-head button { width: 64px; margin-top: 5px; padding: 1px 16px 0 0; border-right: 1px solid #dadada; text-align: right; }
.side-panel { flex: 1; margin-bottom: 3px; border: solid #dedede; border-width: 0 2px 1px 0; overflow: hidden; }
.side-tools { display: flex; align-items: center; gap: 11px; height: 36px; padding-left: 4px; color: #79c96b; }
.side-tools .caret { margin-right: -2px; }
.node { display: flex; justify-content: flex-end; width: 7px; margin-top: 33px; overflow: hidden; white-space: nowrap; color: #27566b; text-decoration: none; }
.node.section { width: 2px; margin-top: 152px; color: #2c8f96; }
.gutter { width: 19px; padding-top: 9px; }

.main { display: flex; flex-direction: column; flex: 1; min-width: 0; border-left: 1px solid #c9c9c9; }
.pages { display: flex; height: 37px; padding-top: 5px; border-bottom: 2px solid #5b9fb5; color: #111; }
.pages button { position: relative; padding: 1px 15px 0 16px; border-right: 1px solid #d5d5d5; line-height: 16px; }
.pages .active { color: #2199b0; font-weight: 700; }
.pages .active::after { content: ""; position: absolute; left: 50%; bottom: 0; margin-left: -4px; border: 4px solid transparent; border-top: 0; border-bottom-color: #5b9fb5; }

.sheet-wrap { position: relative; flex: 1; overflow: hidden; }
.sheet { table-layout: fixed; width: 1646px; border-collapse: separate; border-spacing: 0; font: 12px/14px "Noto Sans Mono CJK SC", "Noto Sans CJK SC", monospace; color: #111; }
.sheet th { height: 26px; padding: 2px 0 0; border: solid #cfd2d3; border-width: 0 1px 1px 0; font-weight: 400; white-space: nowrap; }
.sheet th.current { background: #fcedb3; font-weight: 700; border-bottom: 2px solid #4a9ab3; }
.sheet td { padding: 3px 2px 1px 1px; height: 33px; border: solid #a8b3b7; border-width: 0 1px 1px 0; white-space: pre; vertical-align: middle; overflow: hidden; }
.sheet .item td, .sheet .open td { background: #ade7f9; }
.sheet td.no, .sheet .item td.no, .sheet .open td.no { background: #fdfdfd; padding: 2px 2px 0 0; text-align: center; border-color: #cfcfcf; border-right: 0; }
.sheet .mid { text-align: center; }
.sheet .num { text-align: right; }
.sheet td.code { position: relative; padding: 1px 0 0 12px; }
.sheet td.code::before { content: ""; position: absolute; left: 8px; top: 0; bottom: 0; border-left: 1px solid #a6dcec; }
.code-line { display: flex; align-items: center; gap: 4px; }
.toggle { width: 13px; height: 13px; margin-bottom: 2px; border: 1px solid #7d8d93; background: linear-gradient(#222, #222) center / 7px 1px no-repeat, linear-gradient(#222, #222) center / 1px 7px no-repeat, #e3eef1; }
.toggle.minus { background: linear-gradient(#222, #222) center / 7px 1px no-repeat, #e3eef1; }
.open .code::after { content: ""; position: absolute; left: 18px; top: 52px; bottom: 0; border-left: 1px solid #a9c4cc; }
.struck td { color: #a0a0a0; text-decoration: line-through; }
.sheet .struck .code { padding-left: 39px; }
.sheet .struck td.code::before { left: 18px; border-color: #cfcfcf; }
.struck .code::after { content: ""; position: absolute; left: 19px; top: 15px; width: 15px; border-top: 1px solid #cfcfcf; }
.sheet .editing td.no { background: #fcedb3; }
.sheet .editing td.code { padding: 0; border: 0; }
.sheet .editing td.code::before { display: none; }
.editor { display: flex; justify-content: space-between; align-items: flex-start; height: 33px; padding: 4px 6px 0 6px; border: 2px solid #4d9ca6; border-top-width: 1px; }
.editor input { width: 43px; height: 14px; background: #94bbe4; color: #2e4a6b; }
.editor button { padding-top: 10px; }
.pointer { position: absolute; left: 271px; top: 509px; }

.scrollbar { display: flex; height: 18px; background: #dfdfdf; }
.scrollbar button { display: flex; align-items: center; justify-content: center; width: 12px; height: 14px; background: #fff; }
.thumb { width: 90.4%; height: 14px; margin-left: 1px; background: #c9c9c9; }
.splitter { display: flex; justify-content: center; height: 8px; padding-right: 70px; }
.handle { position: relative; top: -1px; display: flex; justify-content: center; width: 84px; height: 6px; margin-left: 130px; background: #84bd76; }
.details { display: flex; height: 31px; border-bottom: 1px solid #82b878; color: #111; }
.details button { padding: 2px 15px 0 16px; border: solid #b5dba9; border-width: 1px 1px 0 0; line-height: 16px; }
.details .active { background: #7dc269; border-color: #7dc269; color: #fff; font-weight: 700; }

.lower { display: flex; gap: 6px; height: 169px; margin: 3px 0 2px 2px; }
.convert { flex: 1; border: 1px solid #c4ced4; }
.lower table { border-collapse: separate; border-spacing: 0; font-family: "Noto Sans Mono CJK SC", "Noto Sans CJK SC", monospace; color: #111; }
.lower th { padding: 2px 0 0; font-weight: 400; }
.convert th { height: 25px; border: solid #cfd2d3; border-width: 0 1px 1px 0; }
.convert td { height: 32px; padding: 0; }
.convert .c-no { width: 21px; }
.convert .c-list { width: 242px; }
.convert .c-value { width: 242px; }
.convert th.c-value { background: #fcedb3; font-weight: 700; }
.convert td.c-no { background: #fcedb3; border-right: 2px solid #4d9ca6; text-align: center; font-weight: 700; }
.convert td.c-list { padding-left: 3px; background: #dedad9; border-bottom: 1px solid #b5b5b5; }
.convert input { display: block; width: 100%; height: 32px; padding: 2px 0 0 2px; border: 2px solid #4a9aae; background: #fdfdfd; }
.kinds { width: 84px; overflow: hidden; border-top: 1px solid #c4ced4; border-left: 1px solid #a9a9a9; }
.kinds table { table-layout: fixed; width: 160px; }
.kinds th { height: 25px; border: solid #c4c4c4; border-width: 0 1px 1px 0; }
.kinds th:first-child { width: 78px; }
.kinds td { height: 19px; padding: 2px 0 0; text-align: center; border: solid #a9a9a9; border-width: 0 1px 1px 0; }

.status { display: flex; align-items: center; height: 27px; padding-top: 1px; border-top: 1px solid #b5b5b5; background: #efefef; white-space: nowrap; color: #222; }
.tax { width: 117px; border-right: 1px solid #999; line-height: 18px; }
.status-item { padding: 0 27px 0 16px; border-right: 1px solid #999; line-height: 18px; }
.score { width: 80px; height: 22px; margin-left: 26px; border-radius: 3px; background: #4594f8; color: #fff; }

.taskbar { display: flex; height: 40px; background: linear-gradient(90deg, #20373f, #20363f 45%, #1b2b3e 65%, #17233f); color: #fff; }
.task { display: flex; align-items: center; justify-content: center; width: 49px; border-bottom: 2px solid transparent; padding-top: 2px; }
.task.running { background: linear-gradient(#76b0dc, #76b0dc) bottom / 40px 2px no-repeat border-box; }
.task.current { border-bottom-color: #76b0dc; background: #4d6672; }
.yu { width: 24px; height: 24px; border-radius: 3px; background: #6fb1d6; font-size: 18px; line-height: 24px; font-weight: 700; }
.tray { display: flex; align-items: center; gap: 7px; margin-left: auto; padding-right: 3px; }
.cpu, .clock { display: flex; flex-direction: column; align-items: center; line-height: 18px; white-space: nowrap; }
.cpu { margin-right: 12px; }
.clock { align-items: flex-start; margin-left: 12px; }
.t-up { margin-right: 2px; }
.ime { margin-left: 4px; }
.timer { position: absolute; right: -16px; bottom: 43px; width: 48px; height: 48px; padding-left: 4px; border: 2px solid #eef7fd; border-radius: 50%; background: linear-gradient(#5796e6, #59aef0 70%, #8ad4f5 72%); color: #fff; font-size: 12px; line-height: 44px; }
</style>
